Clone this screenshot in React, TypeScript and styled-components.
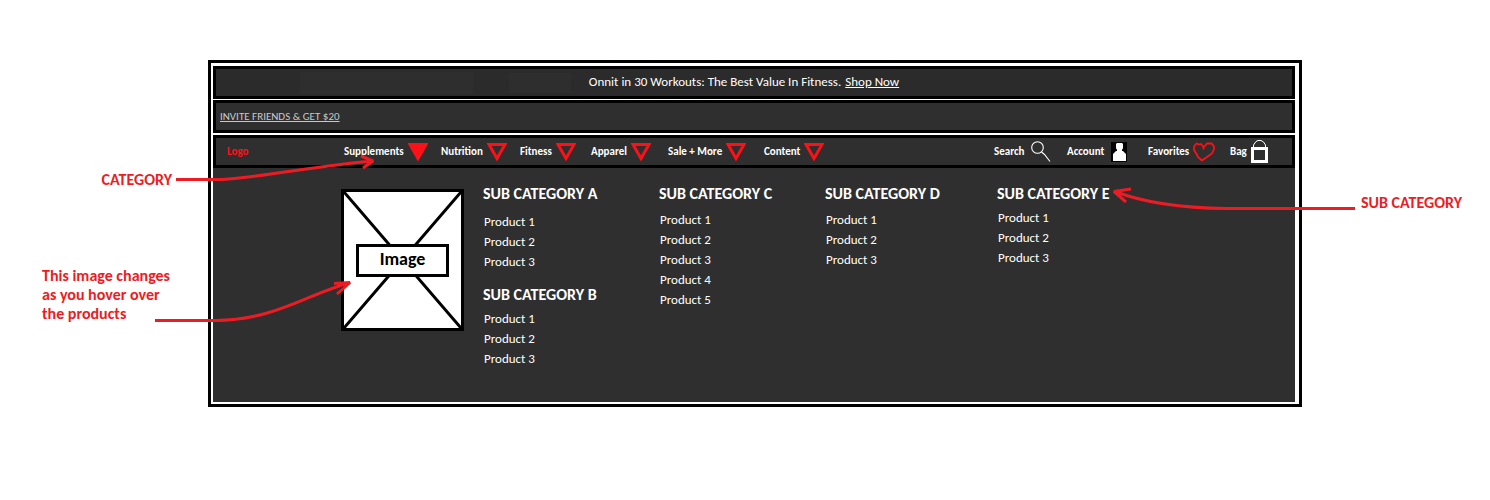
import React from "react";
import styled, { createGlobalStyle } from "styled-components";

const GlobalStyle = createGlobalStyle`
  *, *::before, *::after { box-sizing: border-box; }
  body {
    margin: 0;
    background: #fff;
    font-family: Carlito, Lato, sans-serif;
    font-size: 13px;
    color: #fff;
  }
`;

const Page = styled.main`
  position: relative;
  display: grid;
  grid-template-columns: 208px minmax(1060px, 1fr) 188px;
  min-height: 100vh;
  align-items: start;
  padding: 60px 0;
`;

const Notes = styled.aside`
  display: flex;
  flex-direction: column;
  color: #ed1c24;
`;

const LeftNotes = styled(Notes)`
  padding: 110px 36px 0 42px;
  gap: 77px;
`;

const RightNotes = styled(Notes)`
  padding: 133px 0 0 59px;
`;

const Note = styled.p<{ $align?: "left" | "right" }>`
  margin: 0;
  font-size: 16px;
  font-weight: 700;
  line-height: 19px;
  text-align: ${(p) => p.$align ?? "left"};
`;

const Frame = styled.div`
  border: 3px solid #000;
  padding: 3px 4px 2px 2px;
  background: #fff;
`;

const Bar = styled.div<{ $gap: number }>`
  display: flex;
  align-items: center;
  height: 33px;
  margin-bottom: ${(p) => p.$gap}px;
  border: 3px solid #000;
  background: #2f2f2f;
`;

const Promo = styled(Bar)`
  justify-content: center;
  gap: 4px;
  padding: 0 20px 2px 0;
  background:
    linear-gradient(#2e2e2e, #2e2e2e) 84px 3px / 173px 22px no-repeat,
    linear-gradient(#2e2e2e, #2e2e2e) 293px 4px / 62px 20px no-repeat,
    #2b2b2b;
`;

const Invite = styled(Bar)`
  padding-left: 4px;
  font-size: 11px;
`;

const TextLink = styled.a<{ $color?: string }>`
  color: ${(p) => p.$color ?? "#fff"};
  text-decoration: underline;
`;

const NavBar = styled(Bar)`
  justify-content: space-between;
  padding: 0 23px 0 11px;
  font-size: 11px;
  font-weight: 700;
`;

const Logo = styled.a`
  width: 117px;
  color: #fc1119;
  text-decoration: none;
`;

const Categories = styled.nav`
  display: grid;
  grid-template-columns: 97px 79px 71px 77px 96px 64px;
  margin-right: auto;
`;

const NavButton = styled.button<{ $gap: number }>`
  display: flex;
  align-items: center;
  gap: ${(p) => p.$gap}px;
  padding: 0;
  border: 0;
  background: none;
  color: inherit;
  font: inherit;
  white-space: nowrap;
  cursor: pointer;

  svg { display: block; flex: none; }
`;

const Tools = styled.div`
  display: grid;
  grid-template-columns: 73px 81px 82px 39px;
  align-items: center;
`;

const Menu = styled.section`
  display: flex;
  align-items: flex-start;
  gap: 19px;
  min-height: 234px;
  padding: 16px 0 24px 128px;
  background: #2f2f2f;
`;

const Picture = styled.div`
  position: relative;
  display: grid;
  place-items: center;
  width: 123px;
  height: 142px;
  margin-top: 5px;
  border: 3px solid #000;
  background: #fff;
`;

const Cross = styled.svg`
  position: absolute;
  inset: 0;
  width: 100%;
  height: 100%;
`;

const PictureLabel = styled.span`
  position: relative;
  width: 93px;
  padding-bottom: 2px;
  border: 3px solid #000;
  background: #fff;
  color: #000;
  font-size: 18px;
  font-weight: 700;
  line-height: 25px;
  text-align: center;
`;

const Columns = styled.div`
  display: grid;
  grid-template-columns: 176px 166px 172px 1fr;
  flex: 1;
`;

const Group = styled.div`
  & + & { margin-top: 13px; }
`;

const GroupTitle = styled.h2`
  margin: 0;
  font-size: 16px;
  font-weight: 700;
  line-height: 20px;
`;

const Products = styled.ul<{ $gap: number }>`
  margin: ${(p) => p.$gap}px 0 0;
  padding: 0 0 0 1px;
  list-style: none;
  line-height: 20px;
`;

const ProductLink = styled.a`
  color: inherit;
  text-decoration: none;
`;

const Arrows = styled.svg<{ $side: "left" | "right" }>`
  position: absolute;
  top: 0;
  ${(p) => p.$side}: 0;
  width: 400px;
  height: 340px;
  fill: none;
  stroke: #ed1c24;
  stroke-width: 3;
  stroke-linejoin: bevel;
  pointer-events: none;
`;

const Triangle = ({ filled }: { filled?: boolean }) => (
  <svg width="20" height="18" viewBox="0 0 20 18" aria-hidden="true">
    <path
      d="M2 1.5H18L10 15.5Z"
      fill={filled ? "#fc1119" : "none"}
      stroke="#fc1119"
      strokeWidth="3"
    />
  </svg>
);

const SearchIcon = () => (
  <svg width="20" height="21" viewBox="0 0 20 21" fill="none" stroke="#fff" strokeWidth="1.1" aria-hidden="true">
    <circle cx="6.5" cy="6.5" r="5.8" />
    <path d="M10.5 11L13.5 13.5L19 20.5" />
  </svg>
);

const AccountIcon = () => (
  <svg width="16" height="20" viewBox="0 0 16 20" aria-hidden="true">
    <path d="M0 0H16V20H0Z" fill="#000" />
    <path d="M6 1H11L12 2V6L11 8V9H12L15 12V19H2V12L5 9H6V8L5 6V2Z" fill="#fff" />
  </svg>
);

const HeartIcon = () => (
  <svg width="22" height="20" viewBox="0 0 22 20" fill="none" stroke="#fc1119" strokeWidth="1.8" aria-hidden="true">
    <path d="M10.5 7.5V5L8 2L6 2.5L3.5 1.5L1 4.5V8L3.5 12L5 15L9 18.5L14 15L19 11.5L21 7V4.5L18.5 1.5H14L11 5" />
  </svg>
);

const BagIcon = () => (
  <svg width="17" height="23" viewBox="0 0 17 23" fill="none" stroke="#fff" aria-hidden="true">
    <path d="M2.5 8V5L5 1.5L7 0.5H10L12.5 2L14.5 5V8" />
    <path d="M1.5 8.5H15.5V21.5H1.5Z" strokeWidth="3" />
  </svg>
);

const categories = ["Supplements", "Nutrition", "Fitness", "Apparel", "Sale + More", "Content"];

const tools = [
  { label: "Search", icon: <SearchIcon />, gap: 7 },
  { label: "Account", icon: <AccountIcon />, gap: 7 },
  { label: "Favorites", icon: <HeartIcon />, gap: 4 },
  { label: "Bag", icon: <BagIcon />, gap: 4 },
];

const columns = [
  [
    { title: "SUB CATEGORY A", count: 3, gap: 8 },
    { title: "SUB CATEGORY B", count: 3, gap: 4 },
  ],
  [{ title: "SUB CATEGORY C", count: 5, gap: 6 }],
  [{ title: "SUB CATEGORY D", count: 3, gap: 6 }],
  [{ title: "SUB CATEGORY E", count: 3, gap: 4 }],
];

export default function App() {
  return (
    <>
      <GlobalStyle />
      <Page>
        <LeftNotes>
          <Note $align="right">CATEGORY</Note>
          <Note>This image changes as you hover over the products</Note>
        </LeftNotes>

        <Frame>
          <Promo $gap={1}>
            <span>Onnit in 30 Workouts: The Best Value In Fitness.</span>
            <TextLink href="#shop">Shop Now</TextLink>
          </Promo>
          <Invite $gap={2}>
            <TextLink href="#invite" $color="#c8c8c8">INVITE FRIENDS &amp; GET $20</TextLink>
          </Invite>
          <NavBar $gap={0}>
            <Logo href="#home">Logo</Logo>
            <Categories>
              {categories.map((name, i) => (
                <NavButton key={name} type="button" $gap={4}>
                  {name}
                  <Triangle filled={i === 0} />
                </NavButton>
              ))}
            </Categories>
            <Tools>
              {tools.map((tool) => (
                <NavButton key={tool.label} type="button" $gap={tool.gap}>
                  {tool.label}
                  {tool.icon}
                </NavButton>
              ))}
            </Tools>
          </NavBar>
          <Menu>
            <Picture>
              <Cross viewBox="0 0 117 136" preserveAspectRatio="none" aria-hidden="true">
                <path d="M0 0L117 136M117 0L0 136" stroke="#000" strokeWidth="3" />
              </Cross>
              <PictureLabel>Image</PictureLabel>
            </Picture>
            <Columns>
              {columns.map((groups) => (
                <div key={groups[0].title}>
                  {groups.map((group) => (
                    <Group key={group.title}>
                      <GroupTitle>{group.title}</GroupTitle>
                      <Products $gap={group.gap}>
                        {Array.from({ length: group.count }, (_, i) => (
                          <li key={i}>
                            <ProductLink href="#product">Product {i + 1}</ProductLink>
                          </li>
                        ))}
                      </Products>
                    </Group>
                  ))}
                </div>
              ))}
            </Columns>
          </Menu>
        </Frame>

        <RightNotes>
          <Note>SUB CATEGORY</Note>
        </RightNotes>

        <Arrows $side="left" viewBox="0 0 400 340" aria-hidden="true">
          <path d="M176 179.5H222C265 177 315 166 372 161M361 156L373 161L363 168" />
          <path d="M155 320.5H215C275 320 305 295 349 283M334 283.5L350 282.5L337 294" />
        </Arrows>
        <Arrows $side="right" viewBox="1090 0 400 340" aria-hidden="true">
          <path d="M1355 208.5H1226C1180 208 1145 203 1115 191.5M1131 189L1114 191.5L1126 202" />
        </Arrows>
      </Page>
    </>
  );
}
